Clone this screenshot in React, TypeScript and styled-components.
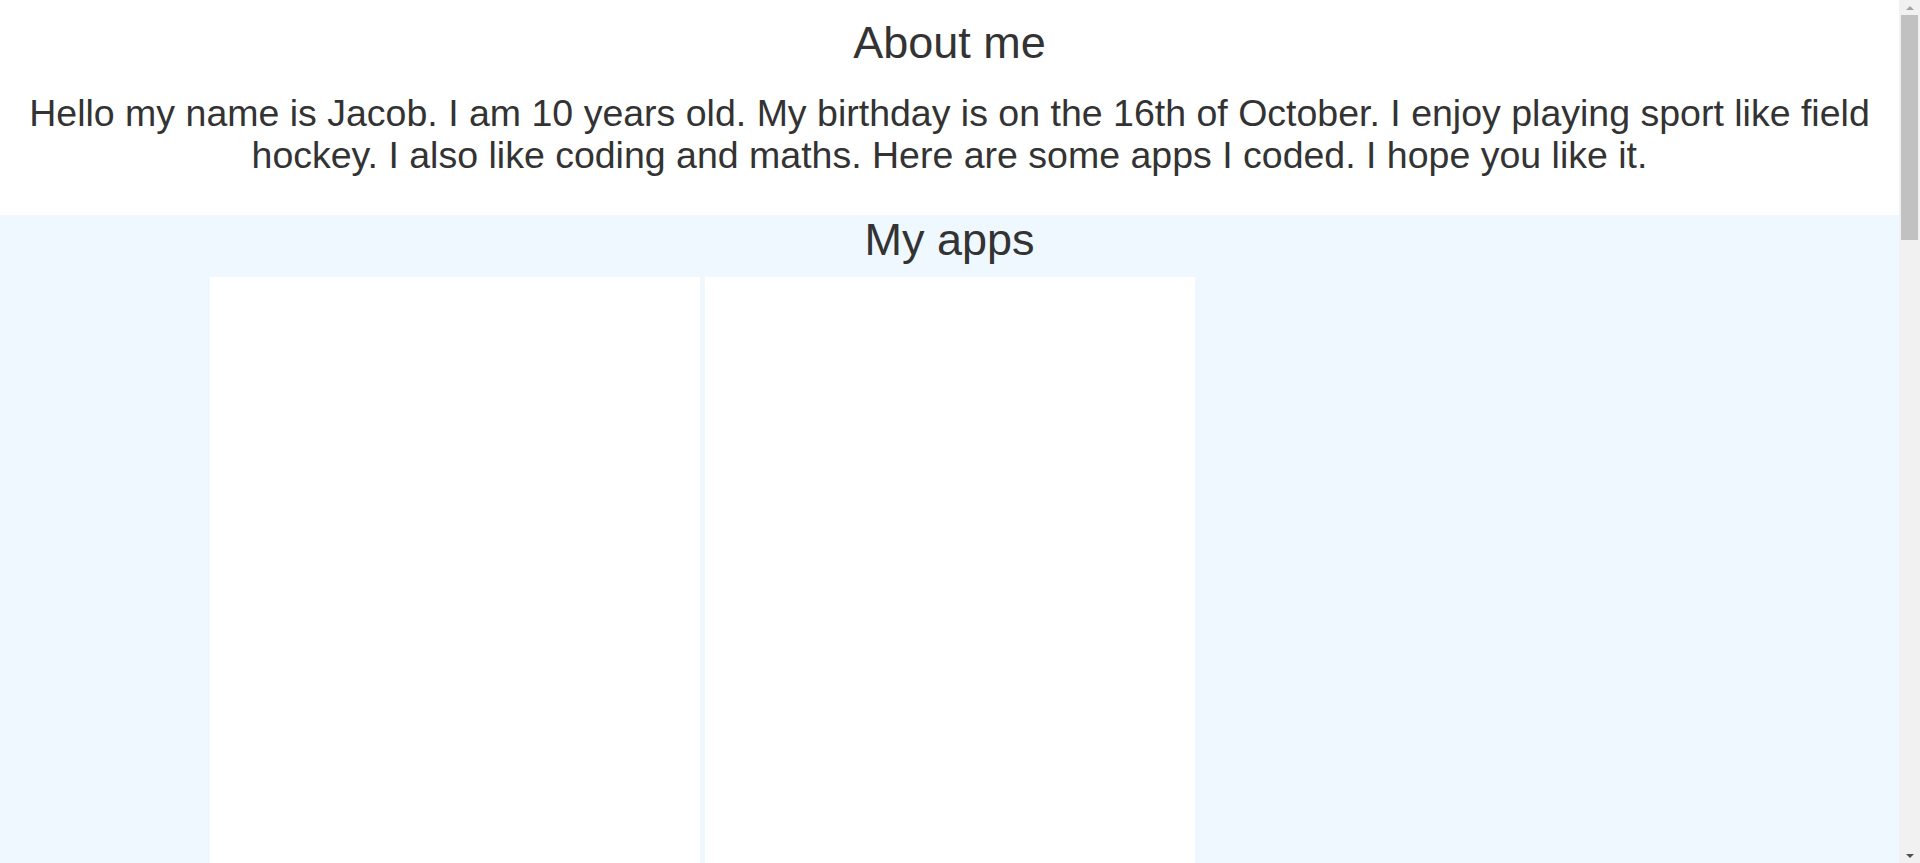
import React from "react";
import styled, { createGlobalStyle } from "styled-components";

const GlobalStyle = createGlobalStyle`
  html, body {
    margin: 0;
    padding: 0;
    background: #ffffff;
  }
  body {
    font-family: "Liberation Sans", Arial, sans-serif;
    color: #333333;
  }
`;

const Page = styled.main`
  margin-right: 21px;
`;

const AboutSection = styled.section`
  background: #ffffff;
  padding: 17px 8px 39px;
  text-align: center;
`;

const Heading = styled.h1`
  margin: 0;
  font-size: 45px;
  font-weight: normal;
  line-height: 51px;
`;

const Intro = styled.p`
  margin: 25px 0 0;
  font-size: 37.5px;
  line-height: 41.5px;
`;

const AppsSection = styled.section`
  background: #f0f8ff;
  padding: 0 0 24px;
`;

const AppsHeading = styled.h2`
  margin: 0;
  font-size: 45px;
  font-weight: normal;
  line-height: 49px;
  text-align: center;
`;

const AppGrid = styled.div`
  display: grid;
  grid-template-columns: repeat(3, 490px);
  justify-content: center;
  gap: 5px;
  padding-top: 13px;
`;

const AppCard = styled.div`
  height: 2880px;
  background: #ffffff;
`;

/* window scrollbar, drawn over the right edge of the viewport */
const ScrollRail = styled.div`
  position: fixed;
  top: 0;
  right: 0;
  width: 21px;
  height: 100vh;
  background: #f1f1f1;
  display: flex;
  flex-direction: column;
  align-items: center;
`;

const ArrowButton = styled.div<{ $down?: boolean }>`
  height: 15px;
  width: 100%;
  display: flex;
  align-items: center;
  justify-content: center;
  flex: none;
  &::before {
    content: "";
    width: 0;
    height: 0;
    border-left: 4px solid transparent;
    border-right: 4px solid transparent;
    ${(p) =>
      p.$down
        ? "border-top: 4px solid #505050;"
        : "border-bottom: 4px solid #a3a3a3;"}
  }
`;

const Thumb = styled.div`
  width: 17px;
  height: 225px;
  background: #c1c1c1;
  flex: none;
`;

const RailSpacer = styled.div`
  flex: 1;
`;

export default function App() {
  return (
    <>
      <GlobalStyle />
      <Page>
        <AboutSection>
          <Heading>About me</Heading>
          <Intro>
            Hello my name is Jacob. I am 10 years old. My birthday is on the
            16th of October. I enjoy playing sport like field hockey. I also
            like coding and maths. Here are some apps I coded. I hope you like
            it.
          </Intro>
        </AboutSection>
        <AppsSection>
          <AppsHeading>My apps</AppsHeading>
          <AppGrid>
            <AppCard />
            <AppCard />
          </AppGrid>
        </AppsSection>
      </Page>
      <ScrollRail aria-hidden="true">
        <ArrowButton />
        <Thumb />
        <RailSpacer />
        <ArrowButton $down />
      </ScrollRail>
    </>
  );
}
